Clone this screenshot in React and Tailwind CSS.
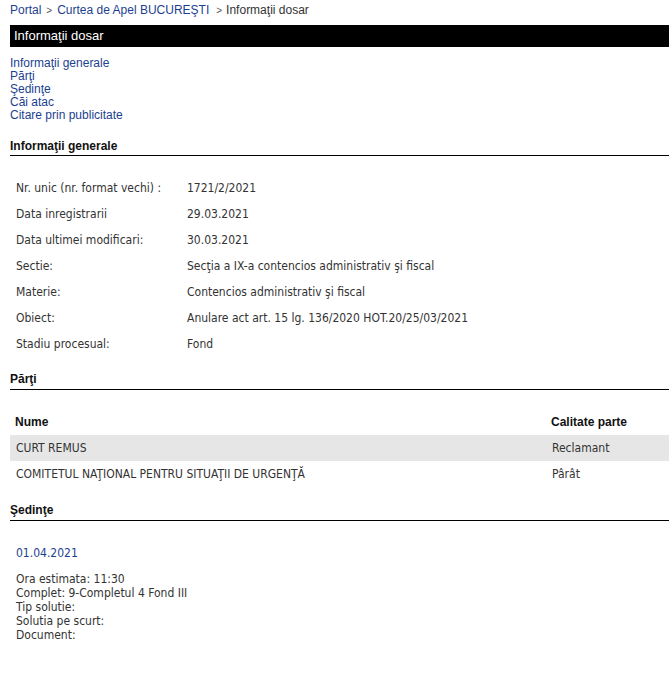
import React from 'react';

const info = [
  ['Nr. unic (nr. format vechi) :', '1721/2/2021'],
  ['Data inregistrarii', '29.03.2021'],
  ['Data ultimei modificari:', '30.03.2021'],
  ['Sectie:', 'Secţia a IX-a contencios administrativ şi fiscal'],
  ['Materie:', 'Contencios administrativ şi fiscal'],
  ['Obiect:', 'Anulare act art. 15 lg. 136/2020 HOT.20/25/03/2021'],
  ['Stadiu procesual:', 'Fond'],
];

const parti = [
  ['CURT REMUS', 'Reclamant'],
  ['COMITETUL NAŢIONAL PENTRU SITUAŢII DE URGENŢĂ', 'Pârât'],
];

const arial = "font-['Liberation_Sans',Arial,sans-serif]";
const tahoma = "font-['DejaVu_Sans_Condensed','DejaVu_Sans',sans-serif]";

const Heading = ({ children, className = '' }) => (
  <div className={`${arial} ${className} text-[12px] leading-[14px] font-bold text-[#111] border-b border-black`}>
    {children}
  </div>
);

export default function App() {
  return (
    <div className={`bg-white min-h-[678px] pl-[10px] ${arial} text-[12px]`}>
      {/* Breadcrumb */}
      <div className="h-[20px] pt-[3px] leading-[14px] text-[#333]">
        <a className="text-[#1d3f8f]">Portal</a>
        <span className="text-[#555] text-[10px] px-[5px]">&gt;</span>
        <a className="text-[#1d3f8f]">Curtea de Apel BUCUREŞTI</a>
        <span className="text-[#555] text-[10px] pl-[7px] pr-[4px]">&gt;</span>
        <span>Informaţii dosar</span>
      </div>

      <div className="mt-[5px] h-[22px] bg-black text-white text-[13px] leading-[22px] pl-[4px]">
        Informaţii dosar
      </div>

      {/* Section links */}
      <div className="pt-[10px] flex flex-col leading-[13px] text-[#1d3f8f]">
        <a>Informaţii generale</a>
        <a>Părţi</a>
        <a>Şedinţe</a>
        <a>Căi atac</a>
        <a>Citare prin publicitate</a>
      </div>

      <Heading className="mt-[17px] pb-[2px]">Informaţii generale</Heading>

      <div className={`mt-[19px] ${tahoma} text-[12px] text-[#333]`}>
        {info.map(([k, v]) => (
          <div key={k} className="flex h-[26px] items-center">
            <div className="w-[177px] pl-[6px] shrink-0">{k}</div>
            <div>{v}</div>
          </div>
        ))}
      </div>

      <Heading className="mt-[15px] pb-[3px]">Părţi</Heading>

      <div className="mt-[19px]">
        <div className="flex h-[26px] items-center font-bold text-[#111]">
          <div className="flex-1 pl-[5px]">Nume</div>
          <div className="w-[118px]">Calitate parte</div>
        </div>
        {parti.map(([n, c], i) => (
          <div key={n} className={`flex h-[26px] items-center ${tahoma} text-[#333] ${i === 0 ? 'bg-[#e6e6e6]' : ''}`}>
            <div className="flex-1 pl-[6px]">{n}</div>
            <div className="w-[117px]">{c}</div>
          </div>
        ))}
      </div>

      <Heading className="mt-[16px] pb-[3px]">Şedinţe</Heading>

      <div className={`pl-[6px] ${tahoma} text-[12px] leading-[14px]`}>
        <div className="mt-[25px] text-[#1d3f8f]">01.04.2021</div>
        <div className="mt-[12px] text-[#333]">
          <div>Ora estimata: 11:30</div>
          <div>Complet: 9-Completul 4 Fond III</div>
          <div>Tip solutie:</div>
          <div>Solutia pe scurt:</div>
          <div>Document:</div>
        </div>
      </div>
    </div>
  );
}
